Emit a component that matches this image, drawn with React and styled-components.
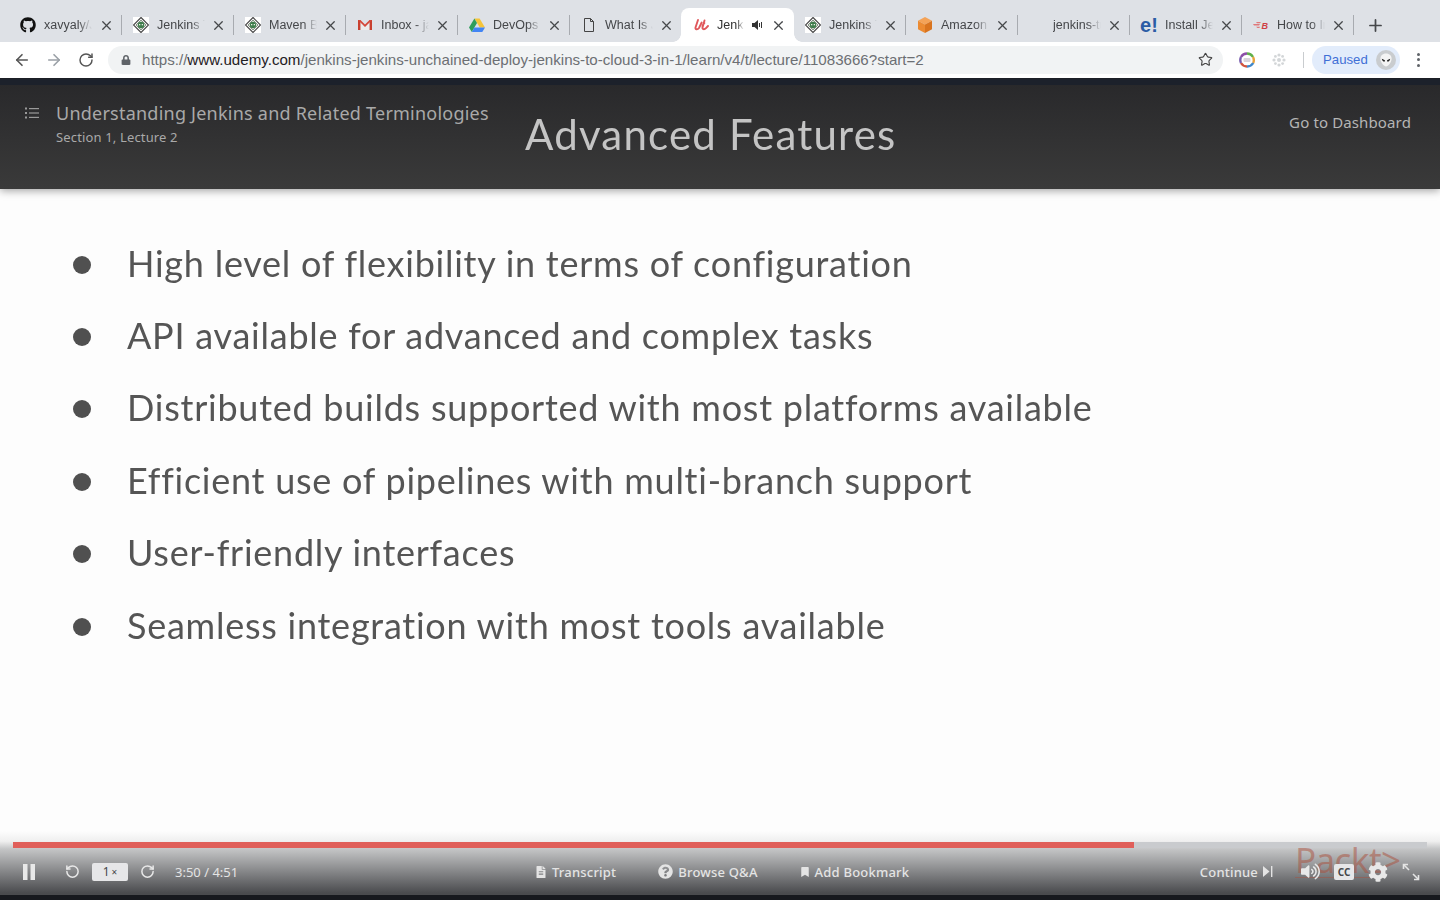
import React from "react";
import styled, { createGlobalStyle, css } from "styled-components";
import { ArrowLeft, ArrowRight, RotateCw, RotateCcw, Star, X, Plus } from "lucide-react";
import { FaGithub, FaLock, FaQuestionCircle, FaBookmark, FaFileAlt, FaVolumeUp, FaCog } from "react-icons/fa";

const GlobalStyle = createGlobalStyle`
  html, body {
    margin: 0;
    padding: 0;
    height: 100%;
    overflow: hidden;
    background: #fff;
  }
  #root {
    height: 100%;
  }
`;

const JenkinsIcon = () => (
  <svg width="16" height="16" viewBox="0 0 16 16">
    <rect width="16" height="16" fill="#fff" />
    <path d="M8 .5 15.5 8 8 15.5.5 8Z" fill="#fff" stroke="#4a4a4a" strokeWidth="1.2" />
    <path d="M8 3 13 8 8 13 3 8Z" fill="#dfe5dc" stroke="#6b7a68" strokeWidth=".8" />
    <circle cx="8" cy="8" r="3.2" fill="#3f7d4c" />
    <rect x="6" y="7" width="1.3" height="1.3" fill="#e8efe5" />
    <rect x="8.7" y="7" width="1.3" height="1.3" fill="#e8efe5" />
  </svg>
);

const GmailIcon = () => (
  <svg width="16" height="16" viewBox="0 0 16 16">
    <path d="M3.4 5 8 9l4.6-4v8H3.4Z" fill="#ececec" />
    <path d="M1 3h2.4v10H1Z" fill="#c8402f" />
    <path d="M12.6 3H15v10h-2.4Z" fill="#c8402f" />
    <path d="M1 3h2.4L8 7.6 12.6 3H15L8 10Z" fill="#d5483a" />
  </svg>
);

const DriveIcon = () => (
  <svg width="16" height="16" viewBox="0 0 16 16">
    <path d="M5.4 1.5h5.2L16 10.6h-5.2Z" fill="#f5c43a" />
    <path d="M5.4 1.5 8 6 2.8 15 0 10.6Z" fill="#2f9e5b" />
    <path d="M5.4 10.6H16L13.3 15H2.8Z" fill="#4285f4" />
  </svg>
);

const PageIcon = () => (
  <svg width="16" height="16" viewBox="0 0 16 16" fill="none" stroke="#444" strokeWidth="1">
    <path d="M3.5 1.5h6l3 3v10h-9Z" />
    <path d="M9.5 1.5v3h3" />
  </svg>
);

// the Udemy "u" with the little tail on the left
const UdemyIcon = () => (
  <svg width="16" height="16" viewBox="0 0 16 16" fill="none" stroke="#e0575b" strokeWidth="1.9" strokeLinecap="round">
    <path d="M5 3 2.5 10.5C2 12.5 4.5 13 6 11L8.7 5.5" />
    <path d="M11.5 3.5 9.5 10.5c-.4 1.8 1.8 2.4 3.5.6L15 9" />
    <path d="M9 9c.8-1.4 1.8-2.4 2.8-3" strokeWidth="1.2" />
  </svg>
);

const AmazonIcon = () => (
  <svg width="16" height="16" viewBox="0 0 16 16">
    <path d="M8 0 15 3.8 8 7.6 1 3.8Z" fill="#f4a358" />
    <path d="M1 3.8 8 7.6V16L1 12.2Z" fill="#ec8b32" />
    <path d="M15 3.8 8 7.6V16l7-3.8Z" fill="#d9741f" />
  </svg>
);

const BaeldungIcon = () => (
  <svg width="16" height="16" viewBox="0 0 16 16">
    <path d="M0 7h7L6 8.5H1ZM3 5h5L7 6.3H4ZM3 9.7h4l-.6 1.3H4.5Z" fill="#e0787a" />
    <text x="8.5" y="11.5" fontFamily="Liberation Sans, sans-serif" fontSize="9" fontWeight="700" fontStyle="italic" fill="#cf3f44">B</text>
  </svg>
);

const SpeakerIcon = () => (
  <svg width="11" height="10" viewBox="0 0 11 10">
    <path d="M0 3h2.5L6 0v10L2.5 7H0Z" fill="#333" />
    <path d="M7.5 3v4M9.5 2v6" stroke="#333" strokeWidth="1" fill="none" />
  </svg>
);

const ChromeAddon = () => (
  <svg width="16" height="16" viewBox="0 0 16 16" fill="none" strokeWidth="2.4">
    <path d="M2 5a7 7 0 0 1 6-3.5" stroke="#8d4fa8" />
    <path d="M8 1.5A7 7 0 0 1 14 5" stroke="#5fb04a" />
    <path d="M14 5a7 7 0 0 1 .2 6" stroke="#e9a23a" />
    <path d="M14.2 11A7 7 0 0 1 8 14.5" stroke="#3f87c9" />
    <path d="M8 14.5A7 7 0 0 1 2 11" stroke="#d2553f" />
    <path d="M2 11a7 7 0 0 1 0-6" stroke="#7a5fb0" />
    <rect x="4.5" y="6" width="7" height="4" rx="1" fill="#d9d4dc" stroke="none" />
  </svg>
);

const SnowIcon = () => (
  <svg width="14" height="14" viewBox="0 0 14 14" fill="#d3d6d8">
    <circle cx="7" cy="7" r="2" />
    <circle cx="7" cy="2" r="1.6" />
    <circle cx="7" cy="12" r="1.6" />
    <circle cx="2" cy="7" r="1.6" />
    <circle cx="12" cy="7" r="1.6" />
    <circle cx="3.4" cy="3.4" r="1.4" />
    <circle cx="10.6" cy="3.4" r="1.4" />
    <circle cx="3.4" cy="10.6" r="1.4" />
    <circle cx="10.6" cy="10.6" r="1.4" />
  </svg>
);

const AlienAvatar = () => (
  <svg width="20" height="20" viewBox="0 0 20 20">
    <circle cx="10" cy="10" r="10" fill="#c9cccf" />
    <path d="M10 3.5c3.6 0 5.6 2.4 5.6 5.2 0 3.4-3.6 7.8-5.6 7.8s-5.6-4.4-5.6-7.8C4.4 5.9 6.4 3.5 10 3.5Z" fill="#f4f4f4" />
    <path d="M5.8 8.8 9 10.2 8.5 11.8C7 11.6 6 10.5 5.8 8.8ZM14.2 8.8 11 10.2 11.5 11.8C13 11.6 14 10.5 14.2 8.8Z" fill="#222" />
  </svg>
);

const ListIcon = () => (
  <svg width="14" height="12" viewBox="0 0 14 12" fill="#9a9a9a">
    <rect x="0" y="0.5" width="2" height="2" />
    <rect x="0" y="5" width="2" height="2" />
    <rect x="0" y="9.5" width="2" height="2" />
    <rect x="4" y="1" width="10" height="1.2" />
    <rect x="4" y="5.4" width="10" height="1.2" />
    <rect x="4" y="9.8" width="10" height="1.2" />
  </svg>
);

const PauseIcon = () => (
  <svg width="12" height="16" viewBox="0 0 12 16" fill="#e8e8e8">
    <rect x="0" y="0" width="4.5" height="16" />
    <rect x="7.5" y="0" width="4.5" height="16" />
  </svg>
);

const NextIcon = () => (
  <svg width="10" height="11" viewBox="0 0 10 11" fill="#e4e4e4">
    <path d="M0 0 6.5 5.5 0 11Z" />
    <rect x="8" y="0" width="1.4" height="11" />
  </svg>
);

const ExpandIcon = () => (
  <svg width="18" height="18" viewBox="0 0 18 18" fill="none" stroke="#e4e4e4" strokeWidth="1.6">
    <path d="M1.5 6V1.5H6" />
    <path d="M1.5 1.5 7 7" />
    <path d="M16.5 12v4.5H12" />
    <path d="M16.5 16.5 11 11" />
  </svg>
);

const bullets = [
  "High level of flexibility in terms of configuration",
  "API available for advanced and complex tasks",
  "Distributed builds supported with most platforms available",
  "Efficient use of pipelines with multi-branch support",
  "User-friendly interfaces",
  "Seamless integration with most tools available",
];

export default function App() {
  const tabs = [
    { title: "xavyaly/Jenkins", icon: <FaGithub size={16} color="#111" /> },
    { title: "Jenkins Tutorial", icon: <JenkinsIcon /> },
    { title: "Maven Build", icon: <JenkinsIcon /> },
    { title: "Inbox - jaya", icon: <GmailIcon /> },
    { title: "DevOps Training", icon: <DriveIcon /> },
    { title: "What Is Jenkins", icon: <PageIcon /> },
    { title: "Jenkins", icon: <UdemyIcon />, active: true },
    { title: "Jenkins Tutorial", icon: <JenkinsIcon /> },
    { title: "Amazon EC2", icon: <AmazonIcon /> },
    { title: "jenkins-tutorial", icon: null },
    { title: "Install Jenkins", icon: <Logo>e!</Logo> },
    { title: "How to Install", icon: <BaeldungIcon /> },
  ];

  return (
    <>
      <GlobalStyle />
      <Page>
        <TabStrip>
          {tabs.map((tab, i) => (
            <Tab key={i} $active={tab.active}>
              <TabIcon>{tab.icon}</TabIcon>
              <TabTitle $narrow={tab.active}>{tab.title}</TabTitle>
              {tab.active && <Speaker><SpeakerIcon /></Speaker>}
              <TabClose>
                <X size={15} strokeWidth={2.1} />
              </TabClose>
            </Tab>
          ))}
          <NewTab>
            <Plus size={19} strokeWidth={2.2} />
          </NewTab>
        </TabStrip>

        <Toolbar>
          <NavButton>
            <ArrowLeft size={18} strokeWidth={2.2} />
          </NavButton>
          <NavButton $dim>
            <ArrowRight size={18} strokeWidth={2.2} />
          </NavButton>
          <NavButton>
            <RotateCw size={16} strokeWidth={2.2} />
          </NavButton>
          <Omnibox>
            <FaLock size={10} color="#5f6368" />
            <Url>
              https://<b>www.udemy.com</b>/jenkins-jenkins-unchained-deploy-jenkins-to-cloud-3-in-1/learn/v4/t/lecture/11083666?start=2
            </Url>
            <Star size={15} strokeWidth={1.8} color="#444" />
          </Omnibox>
          <Addons>
            <ChromeAddon />
            <SnowIcon />
          </Addons>
          <ToolbarDivider />
          <PausedPill>
            Paused
            <AlienAvatar />
          </PausedPill>
          <MenuDots>
            <i />
            <i />
            <i />
          </MenuDots>
        </Toolbar>

        <Player>
          <PlayerHeader>
            <HeaderLeft>
              <ListSlot>
                <ListIcon />
              </ListSlot>
              <div>
                <LectureTitle>Understanding Jenkins and Related Terminologies</LectureTitle>
                <LectureSection>Section 1, Lecture 2</LectureSection>
              </div>
            </HeaderLeft>
            <SlideTitle>Advanced Features</SlideTitle>
            <Dashboard>Go to Dashboard</Dashboard>
          </PlayerHeader>

          <Slide>
            <BulletList>
              {bullets.map((text) => (
                <Bullet key={text}>{text}</Bullet>
              ))}
            </BulletList>
          </Slide>

          <Controls>
            <Progress>
              <ProgressFill style={{ width: `${(1121 / 1414) * 100}%` }} />
            </Progress>
            <Watermark>Packt&gt;</Watermark>
            <ControlRow>
              <ControlGroup>
                <PauseSlot>
                  <PauseIcon />
                </PauseSlot>
                <RotateCcw size={15} strokeWidth={2.4} color="#e8e8e8" />
                <SpeedBox>
                  1<small>×</small>
                </SpeedBox>
                <RotateCw size={15} strokeWidth={2.4} color="#e8e8e8" />
                <TimeText>3:50 / 4:51</TimeText>
              </ControlGroup>
              <CenterActions>
                <Action>
                  <FaFileAlt size={12} />
                  Transcript
                </Action>
                <Action>
                  <FaQuestionCircle size={15} />
                  Browse Q&amp;A
                </Action>
                <Action>
                  <FaBookmark size={10} />
                  Add Bookmark
                </Action>
              </CenterActions>
              <RightActions>
                <Action>
                  Continue
                  <NextIcon />
                </Action>
                <VolumeSlot>
                  <FaVolumeUp size={19} color="#e8e8e8" />
                </VolumeSlot>
                <CcBox>CC</CcBox>
                <FaCog size={20} color="#e8e8e8" />
                <ExpandIcon />
              </RightActions>
            </ControlRow>
            <BottomBar />
          </Controls>
        </Player>
      </Page>
    </>
  );
}

const Page = styled.div`
  display: flex;
  flex-direction: column;
  height: 900px;
  font-family: "Noto Sans", sans-serif;
`;

const TabStrip = styled.div`
  display: flex;
  align-items: flex-end;
  height: 42px;
  padding-left: 11px;
  background: #dee1e6;
  font-family: "Liberation Sans", Arial, sans-serif;
`;

// the selected tab flares out into the toolbar at its two lower corners
const activeTab = css`
  width: 113px;
  margin-left: -1px;
  padding: 0 8px 0 12px;
  background: #fff;
  color: #333;
  &::before,
  &::after {
    content: "";
    position: absolute;
    bottom: 0;
    width: 8px;
    height: 8px;
  }
  &::before {
    left: -8px;
    background: radial-gradient(circle at 0 0, transparent 7.5px, #fff 8px);
  }
  &::after {
    right: -8px;
    background: radial-gradient(circle at 100% 0, transparent 7.5px, #fff 8px);
  }
`;

const idleTab = css`
  width: 112px;
  padding: 0 8px 0 11px;
  color: #45474a;
  &:first-child {
    margin-left: -1px;
    padding-left: 10px;
  }
  &::after {
    content: "";
    position: absolute;
    right: 0;
    top: 7px;
    width: 1px;
    height: 20px;
    background: #a8abb0;
  }
`;

const Tab = styled.div`
  position: relative;
  display: flex;
  align-items: center;
  box-sizing: border-box;
  height: 34px;
  border-radius: 8px 8px 0 0;
  ${(p) => (p.$active ? activeTab : idleTab)}
`;

const TabIcon = styled.span`
  display: flex;
  flex: 0 0 16px;
  width: 16px;
  height: 16px;
  align-items: center;
  justify-content: center;
  margin-right: 8px;
`;

const TabTitle = styled.span`
  flex: 0 0 ${(p) => (p.$narrow ? "27px" : "48px")};
  overflow: hidden;
  white-space: nowrap;
  font-size: 12.5px;
  mask-image: linear-gradient(to right, #000 72%, transparent 100%);
`;

const Speaker = styled.span`
  display: flex;
  margin-left: 8px;
`;

const TabClose = styled.span`
  display: flex;
  margin-left: auto;
  color: #45474a;
`;

const Logo = styled.span`
  font: 700 20px/16px "Liberation Sans", Arial, sans-serif;
  color: #2b5ca5;
`;

const NewTab = styled.div`
  display: flex;
  align-items: center;
  justify-content: center;
  width: 42px;
  height: 34px;
  color: #45474a;
`;

const Toolbar = styled.div`
  display: flex;
  align-items: center;
  box-sizing: border-box;
  height: 37px;
  padding: 0 12px 1px 6px;
  background: #fff;
  border-bottom: 1px solid #1c1f26;
  font-family: "Liberation Sans", Arial, sans-serif;
`;

const NavButton = styled.span`
  display: flex;
  align-items: center;
  justify-content: center;
  width: 32px;
  height: 28px;
  color: ${(p) => (p.$dim ? "#9aa0a6" : "#555")};
`;

const Omnibox = styled.div`
  display: flex;
  align-items: center;
  box-sizing: border-box;
  width: 1115px;
  height: 28px;
  margin-left: 6px;
  padding: 0 10px 0 13px;
  border-radius: 14px;
  background: #f1f3f4;
`;

const Url = styled.span`
  flex: 1;
  margin-left: 11px;
  font-size: 15.12px;
  color: #6c6f73;
  white-space: nowrap;
  b {
    font-weight: 400;
    color: #1f2023;
  }
`;

const Addons = styled.div`
  display: flex;
  align-items: center;
  gap: 17px;
  margin-left: 16px;
`;

const ToolbarDivider = styled.span`
  width: 1px;
  height: 16px;
  margin: 0 8px 0 17px;
  background: #c9cccf;
`;

const PausedPill = styled.div`
  display: flex;
  align-items: center;
  justify-content: space-between;
  box-sizing: border-box;
  width: 88px;
  height: 28px;
  padding: 0 4px 0 11px;
  border-radius: 14px;
  background: #e2ecfb;
  color: #3f6fd6;
  font-size: 13.2px;
`;

const MenuDots = styled.div`
  display: flex;
  flex-direction: column;
  gap: 2.5px;
  margin-left: 17px;
  i {
    display: block;
    width: 3px;
    height: 3px;
    border-radius: 50%;
    background: #5f6368;
  }
`;

const Player = styled.main`
  flex: 1;
  display: flex;
  flex-direction: column;
  background: #fdfdfd;
  overflow: hidden;
`;

const PlayerHeader = styled.header`
  position: relative;
  z-index: 1;
  display: flex;
  align-items: flex-start;
  box-sizing: border-box;
  height: 110px;
  padding: 16px 29px 0 25px;
  border-top: 6px solid #1c212b;
  background: linear-gradient(#29292b, #3a3a3a);
  box-shadow: 0 2px 8px rgba(0, 0, 0, 0.35);
`;

const HeaderLeft = styled.div`
  display: flex;
  width: 500px;
`;

const ListSlot = styled.span`
  flex: 0 0 31px;
  padding-top: 1px;
`;

const LectureTitle = styled.div`
  font-size: 18px;
  line-height: 24px;
  letter-spacing: 0.23px;
  color: #a9a9a9;
  white-space: nowrap;
`;

const LectureSection = styled.div`
  margin-top: 3px;
  font-size: 13px;
  line-height: 18px;
  letter-spacing: 0.15px;
  color: #a9a9a9;
`;

const SlideTitle = styled.h1`
  margin: 5px 0 0;
  font-family: Lato, sans-serif;
  font-size: 42px;
  line-height: 56px;
  font-weight: 400;
  letter-spacing: 1.2px;
  font-variant-ligatures: none;
  color: #c4c4c4;
  white-space: nowrap;
  filter: blur(0.5px);
`;

const Dashboard = styled.a`
  margin: 10px 0 0 auto;
  font-size: 15px;
  line-height: 22px;
  letter-spacing: 0.13px;
  color: #b5b5b5;
`;

const Slide = styled.section`
  flex: 1;
  padding: 39px 0 0 73px;
`;

const BulletList = styled.ul`
  list-style: none;
  margin: 0;
  padding: 0;
  font-family: Lato, sans-serif;
  color: #555;
`;

const Bullet = styled.li`
  display: flex;
  align-items: center;
  height: 72.4px;
  padding-bottom: 3px;
  box-sizing: border-box;
  font-size: 36px;
  letter-spacing: 0.75px;
  font-variant-ligatures: none;
  white-space: nowrap;
  filter: blur(0.5px);
  &::before {
    content: "";
    flex: 0 0 18px;
    height: 18px;
    margin: 4px 36px 0 0;
    border-radius: 50%;
    background: #505050;
  }
`;

const Controls = styled.footer`
  position: relative;
  display: flex;
  flex-direction: column;
  height: 69px;
  padding-top: 11px;
  box-sizing: border-box;
  background: linear-gradient(#fdfdfd 0, #efefef 15%, #c4c5c6 26%, #4a4b4e 90%);
`;

const Watermark = styled.div`
  position: absolute;
  left: 1295px;
  top: 9px;
  height: 37px;
  width: 90px;
  border-bottom: 1px solid rgba(170, 80, 60, 0.45);
  font-size: 35px;
  line-height: 40px;
  letter-spacing: -0.6px;
  color: rgba(170, 80, 60, 0.5);
  white-space: nowrap;
`;

const Progress = styled.div`
  height: 6px;
  margin: 0 13px;
  background: #c9cbce;
`;

const ProgressFill = styled.div`
  height: 100%;
  background: #e05f5a;
`;

const ControlRow = styled.div`
  position: relative;
  display: flex;
  align-items: center;
  height: 47px;
  padding: 0 20px 0 23px;
  font-size: 13px;
  color: #e4e4e4;
`;

const ControlGroup = styled.div`
  display: flex;
  align-items: center;
  width: 512px;
`;

const PauseSlot = styled.span`
  display: flex;
  width: 42px;
`;

const SpeedBox = styled.span`
  display: flex;
  align-items: center;
  justify-content: center;
  gap: 2px;
  width: 36px;
  height: 18px;
  margin: 0 12px;
  border-radius: 2px;
  background: #e6e6e8;
  color: #45474a;
  font-size: 12px;
  small {
    font-size: 10px;
  }
`;

const TimeText = styled.span`
  margin-left: 20px;
  font-size: 13px;
`;

const CenterActions = styled.div`
  display: flex;
  align-items: center;
  gap: 42px;
`;

const Action = styled.span`
  display: flex;
  align-items: center;
  gap: 5px;
  font-size: 13px;
  font-weight: 500;
  letter-spacing: 0.2px;
  color: #e4e4e4;
`;

const RightActions = styled.div`
  display: flex;
  align-items: center;
  gap: 14px;
  margin-left: auto;
`;

const VolumeSlot = styled.span`
  display: flex;
  margin-left: 14px;
`;

const CcBox = styled.span`
  display: flex;
  align-items: center;
  justify-content: center;
  width: 20px;
  height: 16px;
  border-radius: 2px;
  background: #e6e6e8;
  color: #45474a;
  font-size: 10px;
  font-weight: 700;
`;

const BottomBar = styled.div`
  flex: 1;
  background: #17191e;
`;
